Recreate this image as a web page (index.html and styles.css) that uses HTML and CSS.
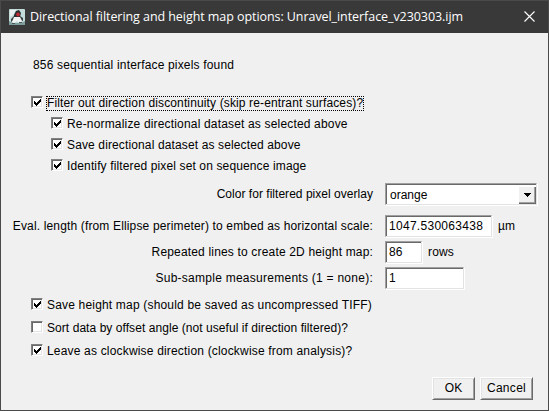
FILE: index.html
```
<!DOCTYPE html>
<html lang="en">
<head>
<meta charset="utf-8">
<title>Directional filtering and height map options</title>
<link rel="stylesheet" href="styles.css">
</head>
<body>
<svg class="defs" width="0" height="0" aria-hidden="true">
  <symbol id="tick" viewBox="0 0 12 12" shape-rendering="crispEdges">
    <path fill="#000" d="M3 5h1v3h-1zM4 6h1v3h-1zM5 7h1v3h-1zM6 6h1v3h-1zM7 5h1v3h-1zM8 4h1v3h-1zM9 3h1v3h-1z"/>
  </symbol>
</svg>
<div class="window">
  <header class="titlebar">
    <svg class="app-icon" width="16" height="16" viewBox="0 0 16 16">
      <rect width="16" height="16" rx="1" fill="#c3dcda"/>
      <path d="M1 1H7L4 6L1 8Z" fill="#e9f0ef"/>
      <path d="M0 12L4 14H12L16 12V16H0Z" fill="#7d9c9b"/>
      <path d="M2 10L5 7V11L2 13ZM11 7L14 9V12L11 11Z" fill="#3a4244"/>
      <path d="M7 2L10 1L12 4L11 8H5L5 6Z" fill="#2a3032"/>
      <path d="M5 8H11L13 12L10 14L8 12L5 14L3 13Z" fill="#f2f4f4"/>
      <path d="M3 14H6V15H3ZM10 13H13V14H10Z" fill="#4b5658"/>
      <ellipse cx="9" cy="5.5" rx="1.8" ry="2" fill="#c42a33"/>
    </svg>
    <h1 class="title">Directional filtering and height map options: Unravel_interface_v230303.ijm</h1>
    <svg class="close" width="11" height="11" viewBox="0 0 11 11"><path d="M.5.5L10.5 10.5M10.5.5L.5 10.5" stroke="#fff" stroke-width="1.1"/></svg>
  </header>
  <main class="content">
    <p class="message ls17">856 sequential interface pixels found</p>
    <div class="checks group-a">
      <label class="check"><span class="box"><svg><use href="#tick"/></svg></span><span class="text focus ls13">Filter out direction discontinuity (skip re-entrant surfaces)?</span></label>
      <label class="check sub"><span class="box"><svg><use href="#tick"/></svg></span><span class="text ls17">Re-normalize directional dataset as selected above</span></label>
      <label class="check sub"><span class="box"><svg><use href="#tick"/></svg></span><span class="text ls13">Save directional dataset as selected above</span></label>
      <label class="check sub"><span class="box"><svg><use href="#tick"/></svg></span><span class="text ls13">Identify filtered pixel set on sequence image</span></label>
    </div>
    <div class="row select-row"><span class="label ls03">Color for filtered pixel overlay</span>
      <div class="field select"><span>orange</span><span class="drop"><svg width="7" height="4" viewBox="0 0 7 4" shape-rendering="crispEdges"><path d="M0 0h7v1h-7zM1 1h5v1h-5zM2 2h3v1h-3zM3 3h1v1h-1z"/></svg></span></div>
    </div>
    <div class="row"><span class="label ls15">Eval. length (from Ellipse perimeter) to embed as horizontal scale:</span><span class="field w107 ls29">1047.530063438</span><span class="unit">µm</span></div>
    <div class="row"><span class="label ls17">Repeated lines to create 2D height map:</span><span class="field w37">86</span><span class="unit ls13">rows</span></div>
    <div class="row"><span class="label ls26">Sub-sample measurements (1 = none):</span><span class="field w79">1</span></div>
    <div class="checks group-b">
      <label class="check"><span class="box"><svg><use href="#tick"/></svg></span><span class="text ls18">Save height map (should be saved as uncompressed TIFF)</span></label>
      <label class="check"><span class="box"></span><span class="text ls06">Sort data by offset angle (not useful if direction filtered)?</span></label>
      <label class="check"><span class="box"><svg><use href="#tick"/></svg></span><span class="text ls18">Leave as clockwise direction (clockwise from analysis)?</span></label>
    </div>
    <footer class="buttons"><button class="ok">OK</button><button class="cancel ls29">Cancel</button></footer>
  </main>
</div>
</body>
</html>
```
FILE: styles.css
```
* { box-sizing: border-box; }
body { margin: 0; font: 12px/15px "Liberation Sans", sans-serif; color: #000; }
.defs { display: block; height: 0; }
.window { width: 549px; height: 411px; border: 1px solid #4a4a4a; background: #f0f0f0; overflow: hidden; }
.titlebar { height: 32px; background: #393939; display: flex; align-items: center; padding: 0 13px 0 8px; }
.app-icon { flex: none; margin-top: -1px; }
.title { margin: 0 0 0 5px; flex: 1; font: 12.5px/20px "Open Sans", sans-serif; letter-spacing: -.065px; color: #fff; white-space: nowrap; }
.close { flex: none; margin-top: -1px; }
.content { white-space: nowrap; }
.message { margin: 0; padding: 25px 0 0 32px; height: 62px; }
.checks { display: grid; padding-left: 30px; }
.group-a { grid-auto-rows: 21px; height: 84px; }
.group-b { grid-auto-rows: 23px; height: 81px; padding-top: 6px; }
.check { display: flex; align-items: flex-start; }
.sub { padding-left: 20px; }
.box { flex: none; width: 12px; height: 12px; margin-top: 1px; border: 1px solid; border-color: #808080 #fff #fff #808080; box-shadow: inset 1px 1px #696969, inset -1px -1px #e3e3e3; background: #fff; }
.box svg { display: block; width: 12px; height: 12px; margin: -1px; }
.text { height: 15px; padding-left: 1px; margin: 1px 0 0 3px; }
.focus { outline: 1px dotted #000; outline-offset: -1px; padding-right: 1px; }
.row { display: flex; align-items: center; height: 26px; }
.select-row { height: 30px; margin-bottom: 4px; }
.label { width: 372px; text-align: right; flex: none; }
.field { display: flex; align-items: center; height: 22px; margin-left: 12px; padding: 0 0 0 3px; line-height: 18px; border: 1px solid; border-color: #a0a0a0 #e3e3e3 #e3e3e3 #a0a0a0; box-shadow: inset 1px 1px #696969, 1px 1px #fff; background: #fff; }
.select { width: 152px; padding: 1px 0 0 4px; justify-content: space-between; }
.drop { width: 18px; height: 18px; display: flex; align-items: center; justify-content: center; background: #f0f0f0; box-shadow: inset 1px 1px #fff, inset -1px -1px #696969, inset -2px -2px #a0a0a0; }
.w107 { width: 107px; }
.w37 { width: 37px; }
.w79 { width: 79px; }
.unit { margin-left: 6px; }
.buttons { display: flex; justify-content: flex-end; gap: 5px; padding: 5px 15px 0 0; }
button { height: 23px; padding: 0; font: inherit; color: #000; border: 1px solid; border-color: #fff #696969 #696969 #fff; box-shadow: inset 1px 1px #e3e3e3, inset -1px -1px #a0a0a0; background: #f0f0f0; border-radius: 0; }
.ok { width: 43px; }
.cancel { width: 53px; }
.ls03 { letter-spacing: .03px; }
.ls06 { letter-spacing: .06px; }
.ls13 { letter-spacing: .13px; }
.ls15 { letter-spacing: .15px; }
.ls17 { letter-spacing: .17px; }
.ls18 { letter-spacing: .18px; }
.ls26 { letter-spacing: .26px; }
.ls29 { letter-spacing: .29px; }
```
